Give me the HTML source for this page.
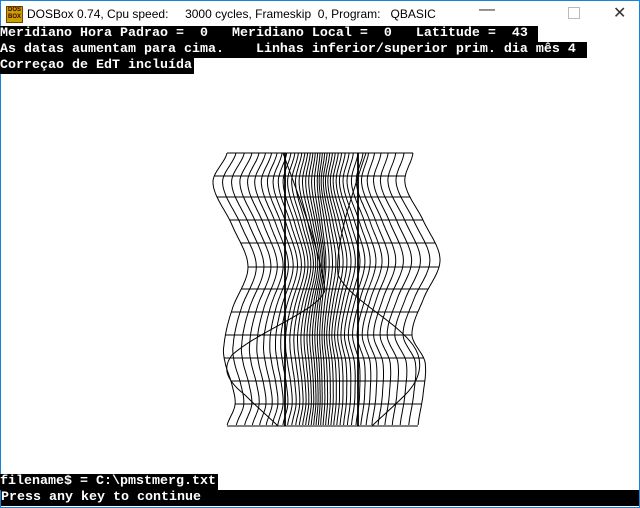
<!DOCTYPE html>
<html><head><meta charset="utf-8"><style>
html,body{margin:0;padding:0;width:640px;height:508px;overflow:hidden;background:#fff}
#win{position:absolute;left:0;top:0;width:638px;height:506px;border:1px solid #1883d7;background:#fff}
#title{position:absolute;left:0;top:0;width:638px;height:25px;background:#fff;font:12px "Liberation Sans",sans-serif;color:#000}
#title .t{position:absolute;left:26px;top:6px;white-space:pre}
#icon{position:absolute;left:5px;top:5px;width:15px;height:15px;background:#c8a000;border:1px solid #6a4a00;font:bold 6px "Liberation Sans",sans-serif;color:#400;line-height:7px;text-align:center}
.ctl{position:absolute;top:4px;font:16px "Liberation Sans",sans-serif;color:#333}
.ln{position:absolute;left:0;height:16px;background:#000;color:#fff;font:bold 13.33px/16px "Liberation Mono",monospace;white-space:pre;letter-spacing:0}
svg{position:absolute;left:0;top:0}
</style></head><body>
<div id="win">
<div id="title"><div id="icon">DOS<br>BOX</div><span class="t">DOSBox 0.74, Cpu speed:     3000 cycles, Frameskip  0, Program:   QBASIC</span>
<span class="ctl" style="left:478px;top:0">&#8212;</span><span class="ctl" style="left:567px;top:6px;width:10px;height:10px;border:1px solid #bbb"></span><span class="ctl" style="left:612px;top:2px">&#x2715;</span></div>
</div>
<div class="ln" style="top:26px;width:538px">Meridiano Hora Padrao =  0   Meridiano Local =  0   Latitude =  43 </div>
<div class="ln" style="top:42px;width:587px">As datas aumentam para cima.    Linhas inferior/superior prim. dia mês 4 </div>
<div class="ln" style="top:58px;width:194px">Correçao de EdT incluída</div>
<div class="ln" style="top:474px;width:218px">filename$ = C:\pmstmerg.txt</div>
<div class="ln" style="top:490px;width:638px;left:1px">Press any key to continue</div>
<svg id="g" width="640" height="508" fill="none" stroke="#000" stroke-width="1"></svg>
<script>
var g=document.getElementById('g'),ns='http://www.w3.org/2000/svg';
var L=[[153,0],[183,-14],[225,5],[267,21],[310,5],[345,-3],[362,-2],[385,5],[405,8],[426,0]];
var R=[[153,0],[183,-8],[220,10],[260,27],[300,10],[335,-1],[362,12],[395,10],[426,5]];
function cr(P,y){for(var i=0;i<P.length-1;i++){if(y<=P[i+1][0]){var t=(y-P[i][0])/(P[i+1][0]-P[i][0]);var p0=(P[i-1]||P[i])[1],p1=P[i][1],p2=P[i+1][1],p3=(P[i+2]||P[i+1])[1];return 0.5*((2*p1)+(-p0+p2)*t+(2*p0-5*p1+4*p2-p3)*t*t+(-p0+3*p1-3*p2+p3)*t*t*t);}}return P[P.length-1][1];}
function path(d,w){var p=document.createElementNS(ns,'path');p.setAttribute('d',d);if(w)p.setAttribute('stroke-width',w);g.appendChild(p);}
function off(y,t){var u=(t+1)/2;var k=0.25+0.75*Math.abs(t);return ((1-u)*cr(L,y)+u*cr(R,y))*k;}
var ys=[153,176,197,220,243,267,289,312,335,358,381,404,426];
var N=40;
for(var i=0;i<=N;i++){var t=i/N*2-1;var c=320+93*(0.5*t+0.5*t*t*t);var d='';for(var y=153;y<=426;y+=2){d+=(y==153?'M':'L')+(c+off(y,t)).toFixed(1)+' '+y;}path(d);}
ys.forEach(function(y){path('M'+(227+off(y,-1)).toFixed(1)+' '+y+'H'+(413+off(y,1)).toFixed(1));});
path('M285 153V426',1.8);path('M358 153V426',1.8);
path('M283 153C300 200 320 250 325 290C320 310 260 330 232 355C222 368 226 380 245 395C258 408 270 418 278 426');
path('M366 153C350 200 335 245 338 275C350 300 395 320 413 345C425 362 420 380 405 395C392 408 380 418 372 426');
</script>
</body></html>
